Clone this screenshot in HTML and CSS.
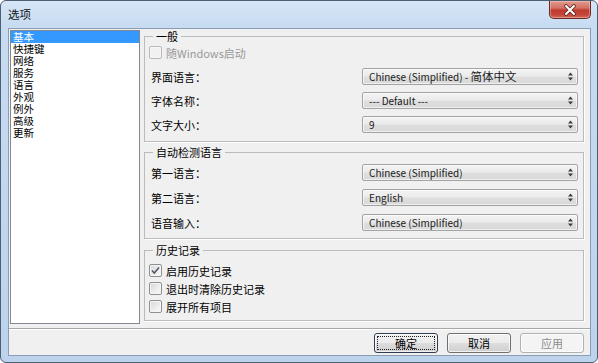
FILE: index.html
```html
<!DOCTYPE html>
<html lang="zh-CN">
<head>
<meta charset="utf-8">
<title>选项</title>
<link rel="stylesheet" href="styles.css">
</head>
<body>
<div class="window">
  <div class="titlebar">
    <span class="title">选项</span>
    <div class="close">
      <svg width="14" height="12" viewBox="0 0 14 12"><path d="M3 2 L11 10 M11 2 L3 10" stroke="#5a2a24" stroke-width="3.6" stroke-linecap="round"/><path d="M3 2 L11 10 M11 2 L3 10" stroke="#fff" stroke-width="2" stroke-linecap="round"/></svg>
    </div>
  </div>
  <div class="client">
    <div class="main">
      <ul class="list">
        <li class="sel">基本</li>
        <li>快捷键</li>
        <li>网络</li>
        <li>服务</li>
        <li>语言</li>
        <li>外观</li>
        <li>例外</li>
        <li>高级</li>
        <li>更新</li>
      </ul>
      <div class="panel">
        <fieldset class="group g1">
          <legend>一般</legend>
          <label class="check disabled"><span class="box"></span><span>随Windows启动</span></label>
          <div class="rows">
            <div class="row"><span class="lbl">界面语言：</span><div class="combo"><span class="val">Chinese (Simplified) - <span class="cjk">简体中文</span></span><svg width="5" height="9" viewBox="0 0 5 9"><path d="M0 3.5 L2.5 0.5 L5 3.5 Z M0 5.5 L2.5 8.5 L5 5.5 Z" fill="#3c3c3c"/></svg></div></div>
            <div class="row"><span class="lbl">字体名称：</span><div class="combo"><span class="val">--- Default ---</span><svg width="5" height="9" viewBox="0 0 5 9"><path d="M0 3.5 L2.5 0.5 L5 3.5 Z M0 5.5 L2.5 8.5 L5 5.5 Z" fill="#3c3c3c"/></svg></div></div>
            <div class="row"><span class="lbl">文字大小：</span><div class="combo"><span class="val">9</span><svg width="5" height="9" viewBox="0 0 5 9"><path d="M0 3.5 L2.5 0.5 L5 3.5 Z M0 5.5 L2.5 8.5 L5 5.5 Z" fill="#3c3c3c"/></svg></div></div>
          </div>
        </fieldset>
        <fieldset class="group g2">
          <legend>自动检测语言</legend>
          <div class="rows">
            <div class="row"><span class="lbl">第一语言：</span><div class="combo"><span class="val">Chinese (Simplified)</span><svg width="5" height="9" viewBox="0 0 5 9"><path d="M0 3.5 L2.5 0.5 L5 3.5 Z M0 5.5 L2.5 8.5 L5 5.5 Z" fill="#3c3c3c"/></svg></div></div>
            <div class="row"><span class="lbl">第二语言：</span><div class="combo"><span class="val">English</span><svg width="5" height="9" viewBox="0 0 5 9"><path d="M0 3.5 L2.5 0.5 L5 3.5 Z M0 5.5 L2.5 8.5 L5 5.5 Z" fill="#3c3c3c"/></svg></div></div>
            <div class="row"><span class="lbl">语音输入：</span><div class="combo"><span class="val">Chinese (Simplified)</span><svg width="5" height="9" viewBox="0 0 5 9"><path d="M0 3.5 L2.5 0.5 L5 3.5 Z M0 5.5 L2.5 8.5 L5 5.5 Z" fill="#3c3c3c"/></svg></div></div>
          </div>
        </fieldset>
        <fieldset class="group g3">
          <legend>历史记录</legend>
          <div class="checks">
            <label class="check"><span class="box"><svg width="11" height="11" viewBox="0 0 11 11"><path d="M2 5.5 L4.3 8 L9 2.5" fill="none" stroke="#4d5560" stroke-width="1.5"/></svg></span><span>启用历史记录</span></label>
            <label class="check"><span class="box"></span><span>退出时清除历史记录</span></label>
            <label class="check"><span class="box"></span><span>展开所有项目</span></label>
          </div>
        </fieldset>
      </div>
    </div>
    <div class="sep"></div>
    <div class="buttons">
      <button class="btn default"><span class="focus">确定</span></button>
      <button class="btn">取消</button>
      <button class="btn" disabled>应用</button>
    </div>
  </div>
</div>
</body>
</html>
```

FILE: styles.css
```css
* { box-sizing: border-box; }
html, body { margin: 0; padding: 0; }
body {
  width: 598px;
  height: 363px;
  overflow: hidden;
  background: #ffffff;
  font-family: "Noto Sans CJK SC", "Microsoft YaHei", sans-serif;
  font-size: 11px;
  color: #000;
}
.window {
  width: 598px;
  height: 363px;
  border: 1px solid #4d5f75;
  border-radius: 6px;
  background: linear-gradient(180deg, #d6e6f7 0px, #c7dbf1 26px, #bdd3ec 100%);
  display: flex;
  flex-direction: column;
  padding: 0 6px 6px 7px;
}
.titlebar {
  height: 27px;
  flex: none;
  display: flex;
  justify-content: space-between;
  align-items: center;
}
.title {
  font-size: 11.5px;
  line-height: 14px;
  color: #111;
  padding-bottom: 1px;
}
.close {
  align-self: flex-start;
  width: 42px;
  height: 18px;
  border: 1px solid #6b2b24;
  border-top: none;
  border-radius: 0 0 5px 5px;
  background: linear-gradient(180deg, #e39a8e 0%, #d27366 40%, #bf3a2e 55%, #c4463a 80%, #d16a5d 100%);
  box-shadow: inset 0 0 0 1px rgba(255, 220, 210, 0.4);
  display: flex;
  justify-content: center;
  align-items: center;
}
.client {
  flex: 1;
  border: 1px solid #8b9db4;
  background: #f0f0f0;
  display: flex;
  flex-direction: column;
}
.main {
  display: flex;
  gap: 4px;
  padding: 1px 0 0 1px;
}
.list {
  list-style: none;
  margin: 0;
  padding: 0;
  width: 130px;
  height: 294px;
  border: 1px solid #828790;
  background: #fff;
}
.list li {
  height: 12px;
  line-height: 12px;
  padding-left: 2px;
  font-size: 10.5px;
}
.list li.sel {
  background: #3399ff;
  color: #fff;
}
.panel {
  width: 440px;
  display: flex;
  flex-direction: column;
}
.group {
  margin: 0;
  padding: 0 5px 0 4px;
  border: 1px solid #bcbcbc;
  box-shadow: 1px 1px 0 #ffffff;
  min-width: 0;
}
.group legend {
  padding: 0 3px;
  margin-left: 4px;
  line-height: 12px;
  height: 12px;
  font-size: 11px;
}
.g1 { padding-bottom: 8px; }
.g2 { margin-top: 4px; padding-bottom: 7px; }
.g3 { margin-top: 5px; padding-bottom: 7px; }
.g1 .check { margin-top: 4px; }
.g1 .rows { margin-top: 9px; gap: 7px; }
.g2 .rows { margin-top: 6px; gap: 8px; }
.rows {
  display: flex;
  flex-direction: column;
}
.row {
  display: flex;
  justify-content: space-between;
  align-items: center;
  height: 17px;
}
.lbl {
  padding-left: 2px;
  line-height: 12px;
}
.combo {
  width: 216px;
  height: 17px;
  border: 1px solid #a3a3a3;
  border-radius: 2px;
  background: linear-gradient(180deg, #f3f3f3 0%, #ebebeb 48%, #dfdfdf 52%, #d8d8d8 100%);
  box-shadow: inset 0 0 0 1px rgba(255, 255, 255, 0.6);
  display: flex;
  align-items: center;
  justify-content: space-between;
  padding: 0 4px 0 6px;
}
.val {
  font-size: 10px;
  line-height: 12px;
  color: #1a1a1a;
}
.val .cjk { font-size: 11.5px; }
.check {
  display: flex;
  align-items: center;
  gap: 4px;
  height: 13px;
  line-height: 12px;
}
.box {
  width: 13px;
  height: 13px;
  flex: none;
  border: 1px solid #8e8f8f;
  border-radius: 2px;
  background: linear-gradient(135deg, #d3d5d8 0%, #eeeeee 60%, #fafafa 100%);
  box-shadow: inset 0 0 0 1px #f6f6f6;
  display: flex;
  align-items: center;
  justify-content: center;
}
.check.disabled { color: #9a9a9a; }
.check.disabled .box {
  border-color: #b9b9b9;
  background: #f1f1f1;
}
.checks {
  margin-top: 8px;
  display: flex;
  flex-direction: column;
  gap: 5px;
}
.sep {
  margin-top: 4px;
  height: 2px;
  border-top: 1px solid #a7a7a7;
  border-bottom: 1px solid #ffffff;
}
.buttons {
  margin-top: 3px;
  display: flex;
  justify-content: flex-end;
  gap: 9px;
  padding-right: 6px;
}
.btn {
  width: 64px;
  height: 20px;
  margin: 0;
  padding: 0;
  font-family: inherit;
  font-size: 11px;
  color: #000;
  border: 1px solid #707070;
  border-radius: 3px;
  background: linear-gradient(180deg, #f2f2f2 0%, #ebebeb 48%, #dddddd 52%, #cfcfcf 100%);
  box-shadow: inset 0 0 0 1px rgba(255, 255, 255, 0.7);
  display: flex;
  align-items: center;
  justify-content: center;
}
.btn.default {
  border-color: #2f3f50;
  padding: 2px;
}
.focus {
  flex: 1;
  align-self: stretch;
  border: 1px dotted #222;
  display: flex;
  align-items: center;
  justify-content: center;
}
.btn:disabled {
  border-color: #adb2b5;
  background: #f4f4f4;
  color: #8b8b8b;
}
```
